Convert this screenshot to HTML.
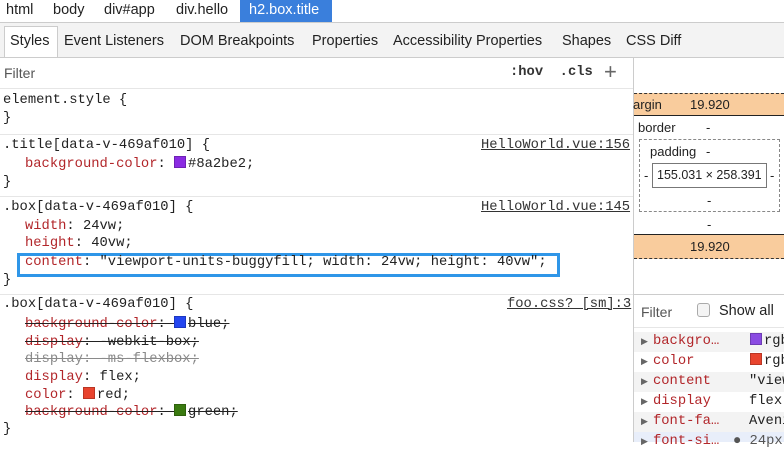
<!DOCTYPE html>
<html><head><meta charset="utf-8"><style>
*{margin:0;padding:0;box-sizing:border-box}
body{width:784px;height:442px;overflow:hidden;background:#fff;position:relative;font-family:"Liberation Sans",sans-serif;color:#222}
.a{position:absolute;white-space:pre}
.m{font-family:"Liberation Mono",monospace;font-size:13.8px;line-height:18px}
.p{color:#b2262a}
.s{text-decoration:line-through}
.g{color:#8a8a8a}
.sw{display:inline-block;width:12px;height:12px;vertical-align:-1px;margin-right:2px;border:1px solid rgba(0,0,0,.2)}
.ln{position:absolute;left:0;width:633px;height:1px;background:#e6e6e6}
.lk{text-decoration:underline;color:#333}
.t{font-size:14.5px}
.ar{position:absolute;left:641px;font-size:9px;color:#666;line-height:20px}
</style></head><body>
<div class="a t" style="left:6px;top:2px">html</div>
<div class="a t" style="left:53px;top:2px">body</div>
<div class="a t" style="left:104px;top:2px">div#app</div>
<div class="a t" style="left:176px;top:2px">div.hello</div>
<div class="a t" style="left:240px;top:0;height:22px;width:92px;background:#3a7fdc;color:#fff;padding:2px 0 0 9px">h2.box.title</div>
<div class="a" style="left:0;top:22px;width:784px;height:36px;background:#f3f3f3;border-top:1px solid #ccc;border-bottom:1px solid #ccc"></div>
<div class="a" style="left:4px;top:26px;width:54px;height:31px;background:#fff;border:1px solid #ccc;border-bottom:none"></div>
<div class="a t" style="left:10px;top:33px">Styles</div>
<div class="a t" style="left:64px;top:33px">Event Listeners</div>
<div class="a t" style="left:180px;top:33px">DOM Breakpoints</div>
<div class="a t" style="left:312px;top:33px">Properties</div>
<div class="a t" style="left:393px;top:33px">Accessibility Properties</div>
<div class="a t" style="left:562px;top:33px">Shapes</div>
<div class="a t" style="left:626px;top:33px">CSS Diff</div>
<div class="a" style="left:4px;top:65px;font-size:14px;color:#555">Filter</div>
<div class="a m" style="left:510px;top:64px;font-weight:bold;color:#333">:hov  .cls</div>
<div class="a" style="left:604px;top:59px;font-size:22px;color:#666">+</div>
<div class="ln" style="top:88px"></div>
<div class="a" style="left:633px;top:58px;width:1px;height:384px;background:#ccc"></div>
<div class="a m" style="left:3px;top:92px">element.style {</div>
<div class="a m" style="left:3px;top:110px">}</div>
<div class="ln" style="top:134px"></div>
<div class="a m" style="left:3px;top:137px">.title[data-v-469af010] {</div>
<div class="a m lk" style="left:481px;top:137px">HelloWorld.vue:156</div>
<div class="a m" style="left:25px;top:156px"><span class="p">background-color</span>: <span class="sw" style="background:#8a2be2"></span>#8a2be2;</div>
<div class="a m" style="left:3px;top:174px">}</div>
<div class="ln" style="top:196px"></div>
<div class="a m" style="left:3px;top:199px">.box[data-v-469af010] {</div>
<div class="a m lk" style="left:481px;top:199px">HelloWorld.vue:145</div>
<div class="a m" style="left:25px;top:218px"><span class="p">width</span>: 24vw;</div>
<div class="a m" style="left:25px;top:235px"><span class="p">height</span>: 40vw;</div>
<div class="a" style="left:17px;top:253px;width:543px;height:24px;border:3px solid #2f96e8"></div>
<div class="a m" style="left:25px;top:254px"><span class="p">content</span>: "viewport-units-buggyfill; width: 24vw; height: 40vw";</div>
<div class="a m" style="left:3px;top:272px">}</div>
<div class="ln" style="top:294px"></div>
<div class="a m" style="left:3px;top:296px">.box[data-v-469af010] {</div>
<div class="a m lk" style="left:507px;top:296px">foo.css? [sm]:3</div>
<div class="a m s" style="left:25px;top:316px"><span class="p">background-color</span>: <span class="sw" style="background:#2446f0"></span>blue;</div>
<div class="a m s" style="left:25px;top:334px"><span class="p">display</span>: -webkit-box;</div>
<div class="a m s g" style="left:25px;top:351px">display: -ms-flexbox;</div>
<div class="a m" style="left:25px;top:369px"><span class="p">display</span>: flex;</div>
<div class="a m" style="left:25px;top:387px"><span class="p">color</span>: <span class="sw" style="background:#e8442e"></span>red;</div>
<div class="a m s" style="left:25px;top:404px"><span class="p">background-color</span>: <span class="sw" style="background:#3a7a10"></span>green;</div>
<div class="a m" style="left:3px;top:421px">}</div>
<div class="a" style="left:634px;top:93px;width:150px;height:23px;background:#f9cc9d;border-top:1px dashed #333;border-bottom:1px solid #222"></div>
<div class="a" style="left:633px;top:97px;font-size:13px">argin</div>
<div class="a" style="left:690px;top:97px;font-size:13px">19.920</div>
<div class="a" style="left:638px;top:120px;font-size:13px">border</div>
<div class="a" style="left:706px;top:120px;font-size:13px">-</div>
<div class="a" style="left:639px;top:139px;width:141px;height:73px;border:1px dashed #888"></div>
<div class="a" style="left:650px;top:144px;font-size:13px">padding</div>
<div class="a" style="left:706px;top:144px;font-size:13px">-</div>
<div class="a" style="left:644px;top:168px;font-size:13px">-</div>
<div class="a" style="left:652px;top:163px;width:115px;height:25px;border:1px solid #777"></div>
<div class="a" style="left:657px;top:168px;font-size:12.5px">155.031 × 258.391</div>
<div class="a" style="left:770px;top:168px;font-size:13px">-</div>
<div class="a" style="left:707px;top:193px;font-size:13px">-</div>
<div class="a" style="left:707px;top:217px;font-size:13px">-</div>
<div class="a" style="left:634px;top:234px;width:150px;height:25px;background:#f9cc9d;border-top:1px solid #222;border-bottom:1px dashed #333"></div>
<div class="a" style="left:690px;top:239px;font-size:13px">19.920</div>
<div class="a" style="left:634px;top:294px;width:150px;height:1px;background:#ccc"></div>
<div class="a" style="left:641px;top:304px;font-size:14px;color:#555">Filter</div>
<div class="a" style="left:697px;top:303px;width:13px;height:14px;border:1px solid #aaa;border-radius:3px;background:#f4f4f4"></div>
<div class="a" style="left:719px;top:303px;font-size:14.5px">Show all</div>
<div class="a" style="left:634px;top:327px;width:150px;height:1px;background:#e6e6e6"></div>
<div class="a" style="left:634px;top:332px;width:150px;height:20px;background:#f3f3f3"></div>
<div class="a" style="left:634px;top:372px;width:150px;height:20px;background:#f3f3f3"></div>
<div class="a" style="left:634px;top:412px;width:150px;height:20px;background:#f3f3f3"></div>
<div class="a" style="left:634px;top:432px;width:150px;height:10px;background:#e8eefa"></div>
<div class="ar" style="top:331px">▶</div>
<div class="ar" style="top:351px">▶</div>
<div class="ar" style="top:371px">▶</div>
<div class="ar" style="top:391px">▶</div>
<div class="ar" style="top:411px">▶</div>
<div class="ar" style="top:431px">▶</div>
<div class="a m p" style="left:653px;top:332px;line-height:20px">backgro…</div>
<div class="a m p" style="left:653px;top:352px;line-height:20px">color</div>
<div class="a m p" style="left:653px;top:372px;line-height:20px">content</div>
<div class="a m p" style="left:653px;top:392px;line-height:20px">display</div>
<div class="a m p" style="left:653px;top:412px;line-height:20px">font-fa…</div>
<div class="a m p" style="left:653px;top:432px;line-height:20px">font-si…</div>
<div class="a m" style="left:750px;top:332px;line-height:20px"><span class="sw" style="background:#8a4be2"></span>rgb</div>
<div class="a m" style="left:750px;top:352px;line-height:20px"><span class="sw" style="background:#e8442e"></span>rgb</div>
<div class="a m" style="left:749px;top:372px;line-height:20px">"view</div>
<div class="a m" style="left:749px;top:392px;line-height:20px">flex</div>
<div class="a m" style="left:749px;top:412px;line-height:20px">Aveni</div>
<div class="a m" style="left:733px;top:432px;line-height:20px;color:#555">● 24px</div>
</body></html>
